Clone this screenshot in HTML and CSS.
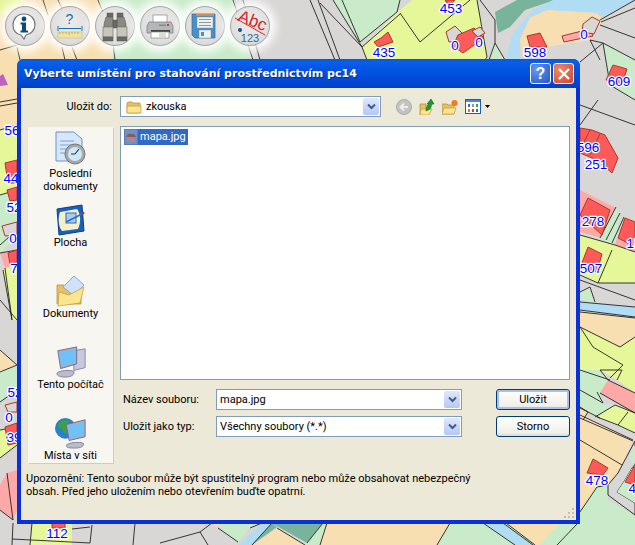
FILE: index.html
```html
<!DOCTYPE html>
<html lang="cs">
<head>
<meta charset="utf-8">
<title>Mapa</title>
<link rel="stylesheet" href="styles.css">
</head>
<body>
<svg class="map" width="635" height="545" viewBox="0 0 635 545">
  <rect class="road" width="635" height="545"/>
  <g class="parcels">
    <polygon class="beige" points="0,0 105,0 116,60 0,60"/>
    <polygon class="yellow" points="0,0 25,0 0,15"/>
    <polygon class="green" points="100,0 233,0 253,60 113,60"/>
    <polygon class="green" points="333,0 400,0 397,12 360,42"/>
    <polygon class="yellow" points="362,47 397,13 412,0 477,0 487,57 488,60 367,60"/>
    <polygon class="green" points="495,43 505,60 489,60"/>
    <polygon class="teal" points="495,12 517,0 555,0 525,10 510,27 498,33"/>
    <polygon class="blue" points="505,60 513,33 533,10 553,0 635,0 602,17 597,13 547,10 530,17 520,37 520,60"/>
    <polygon class="beige" points="547,10 597,13 603,20 590,40 547,47 523,58 520,40 530,18"/>
    <polygon class="green" points="603,43 635,60 635,100 610,85"/>
    <polygon class="beige" points="0,60 17,60 17,125 0,130"/>
    <polygon class="magenta" points="0,76 3,74 8,85 0,86"/>
    <polygon class="yellow" points="0,130 17,125 17,190 0,195"/>
    <polygon class="green" points="0,195 17,190 17,225 2,226 0,250"/>
    <polygon class="green" points="0,226 17,236 0,253"/>
    <polygon class="pink" points="0,253 17,250 17,265 5,268"/>
    <polygon class="yellow" points="3,270 17,263 17,320 12,320"/>
    <polygon class="beige" points="0,350 17,365 0,372"/>
    <polygon class="green" points="0,372 17,365 17,390 0,402"/>
    <polygon class="yellow" points="0,430 17,427 17,445 0,458"/>
    <polygon class="pink" points="7,473 17,470 17,510 13,520 0,510 0,485"/>
    <polygon class="yellow" points="32,523 72,523 72,545 30,545"/>
    <polygon class="beige" points="212,523 222,523 216,527"/>
    <polygon class="green" points="222,523 262,523 250,528 238,542 218,528"/>
    <polygon class="teal" points="273,523 323,523 307,543 275,525"/>
    <polygon class="teal" points="240,545 272,523 277,527 252,545"/>
    <polygon class="blue" points="263,523 272,523 252,545 238,545"/>
    <polygon class="beige" points="277,528 305,545 253,545"/>
    <polygon class="green" points="323,523 327,523 320,545 305,545"/>
    <polygon class="beige" points="327,523 450,523 437,545 320,545"/>
    <polygon class="green" points="450,523 635,523 635,545 437,545"/>
    <polygon class="blue" points="483,523 503,523 533,545 515,545"/>
    <polygon class="beige" points="506,523 578,523 557,545 535,545"/>
    <polygon class="pink" points="580,190 616,208 600,238 580,232"/>
    <polygon class="green" points="580,232 600,238 616,208 620,213 617,237 615,245"/>
    <polygon class="pink" points="617,238 635,248 635,255 615,245"/>
    <polygon class="yellow" points="580,235 615,245 635,252 635,283 598,283 580,275"/>
    <polygon class="green" points="580,292 590,287 595,302 580,300"/>
    <polygon class="blue" points="580,302 635,307 635,317 580,310"/>
    <polygon class="beige" points="580,312 635,318 635,337 620,347 580,327"/>
    <polygon class="yellow" points="580,327 620,347 635,337 635,370 622,370 617,380 600,370 580,370"/>
    <polygon class="green" points="580,370 600,370 608,380 600,393 603,403 580,390"/>
    <polygon class="pink" points="608,380 635,393 635,413 600,393"/>
    <polygon class="yellow" points="622,370 635,370 635,393 617,380"/>
    <polygon class="green" points="580,390 605,405 595,417 580,408"/>
    <polygon class="yellow" points="597,417 615,405 635,413 635,433 618,425"/>
    <polygon class="green" points="605,405 615,405 597,417 595,417"/>
    <polygon class="beige" points="580,415 633,440 620,470 608,485 597,487 580,512"/>
    <polygon class="beige" points="580,407 588,412 583,420 580,418"/>
    <polygon class="green" points="580,512 597,487 608,485 608,500 635,515 635,545 540,545 560,523"/>
    <polygon class="roadline" points="635,441 618,473 608,485 608,495 635,515 635,503 617,492 625,480 635,463"/>
    <polygon class="green" points="630,455 635,445 635,463 625,480 617,492 635,503 635,480"/>
  </g>
  <g class="lines">
    <path d="M43 0 48 15M58 0 65 15M98 0 112 35 115 60M62 47 65 60M72 47 77 60M17 47 20 60M0 50 17 45M233 0 253 60M243 0 260 60"/>
    <path d="M310 0 335 60M318 0 340 60M320 3 362 47 367 60M333 0 362 47M342 0 360 42M360 42 397 12 400 0M362 47 400 14M400 13 420 42M420 42 470 0M477 0 487 57 485 60M480 0 495 20 495 43 489 60M495 43 505 60"/>
    <path d="M600 20 635 0M601 22 635 8M600 25 635 38M603 43 635 60M610 85 635 100M603 43 610 85M590 40 600 60M590 40 603 43M580 62 603 43M580 105 635 125M598 100 580 125"/>
    <path d="M0 102 17 99M0 106 17 103M0 130 17 125M0 195 17 190M0 245 17 230M0 253 17 250M5 268 12 320M0 300 17 320M3 270 12 320M0 350 17 365M0 372 17 365M0 402 17 390M0 430 17 427M0 458 17 445M7 473 13 520M0 510 13 520"/>
    <path d="M13 523 12 545M32 523 30 545M72 529 90 527M92 525 90 543M12 539 90 543M135 523 133 545M160 543 200 532 208 545M200 532 212 523M218 528 238 542M250 528 262 523M272 523 252 545M277 528 305 545M323 523 307 543M327 523 320 545M450 523 437 545M483 523 515 545M503 523 533 545M506 523 535 545M578 523 557 545"/>
    <path d="M600 238 616 207M606 240 620 213M612 243 624 217M580 235 615 245 635 252M580 275 598 283 612 250M598 283 635 283M580 280 635 300M580 292 590 287 595 302M580 302 635 307M580 310 635 317M580 312 635 318M635 337 620 347 580 327M580 327 593 347 623 365 610 378M580 370 610 380"/>
    <path d="M580 390 603 403M600 370 622 370M617 380 622 370M608 380 635 393M600 393 635 413M595 417 615 405 635 413M597 417 618 425 635 433M618 425 628 412M580 415 633 440M580 408 600 418M580 440 622 465M580 512 597 487 608 485M588 412 583 420M580 407 588 412M580 418 633 441M600 370 608 380M597 392 603 403"/>
  </g>
  <g class="houses">
    <polygon class="house" points="445,0 455,0 452,3 447,3"/>
    <polygon class="house" points="388,32 393,42 378,47 374,42 381,38"/>
    <polygon class="roof" points="446,32 455,26 462,33 461,40 449,42"/>
    <polygon class="house" points="458,35 474,28 484,38 463,53 453,46"/>
    <polygon class="roof" points="472,31 480,27 485,33 478,37"/>
    <polygon class="light" points="562,36 590,29 593,36 564,42"/>
    <polygon class="roof" points="583,24 592,17 600,21 594,34 582,32"/>
    <polygon class="house" points="527,36 540,33 547,47 530,47"/>
    <polygon class="house" points="613,65 627,69 622,84 606,80"/>
    <polygon class="house" points="580,128 592,130 605,135 618,158 612,173 597,160 580,153"/>
    <path class="hline" d="M590 130 580 150M600 134 590 155"/>
    <polygon class="house" points="588,198 610,210 602,235 580,215"/>
    <polygon class="house" points="625,218 635,222 635,247 618,238"/>
    <polygon class="house" points="588,247 602,254 597,272 580,268"/>
    <polygon class="house" points="593,459 608,468 603,475 587,473"/>
    <polygon class="house" points="635,465 625,482 635,485"/>
    <polygon class="house" points="5,163 17,160 17,183 8,183"/>
    <polygon class="house" points="7,190 17,187 17,200 10,201"/>
    <polygon class="roof" points="2,226 17,222 17,235 5,236"/>
    <polygon class="house" points="8,253 17,250 17,262 10,264"/>
    <polygon class="roof" points="5,405 17,402 17,412 8,412"/>
    <polygon class="house" points="5,427 17,423 17,443 8,445"/>
    <polygon class="house" points="52,523 65,523 65,528 52,528"/>
  </g>
  <g class="labels">
    <text x="451" y="13">453</text>
    <text x="384" y="57">435</text>
    <text x="455" y="50">0</text>
    <text x="479" y="47">0</text>
    <text x="535" y="57">598</text>
    <text x="584" y="39">0</text>
    <text x="619" y="86">609</text>
    <text x="588" y="152">596</text>
    <text x="596" y="169">251</text>
    <text x="593" y="226">278</text>
    <text x="634" y="248">15</text>
    <text x="591" y="273">507</text>
    <text x="597" y="485">478</text>
    <text x="636" y="493">46</text>
    <text x="57" y="538">112</text>
    <text x="12" y="135">56</text>
    <text x="11" y="183">44</text>
    <text x="14" y="212">52</text>
    <text x="13" y="243">0</text>
    <text x="14" y="273">7</text>
    <text x="15" y="397">52</text>
    <text x="9" y="422">0</text>
    <text x="14" y="442">39</text>
  </g>
</svg>

<nav class="toolbar">
  <span class="tool">
    <svg width="40" height="40" viewBox="0 0 40 40"><path class="i-bubble" d="M19 8C12 8 8 13 8 19c0 5 3 9 8 10l3 4 2-4c5-1 9-5 9-10 0-6-4-11-11-11z"/><circle class="i-blue" cx="19" cy="13" r="2.400"/><path class="i-blue" d="M15.500 16.500h5.500v8h2v2h-7.500v-2h1.500v-6h-1.500z"/></svg>
  </span>
  <span class="tool">
    <svg width="40" height="40" viewBox="0 0 40 40"><rect class="ruler" x="8" y="26" width="24" height="6"/><path class="ruler-ticks" d="M10 26v2M13 26v2M16 26v2M19 26v3M22 26v2M25 26v2M28 26v2"/><path class="arrow" d="M9 22.500h22M8 20v5M32 20v5"/><text class="q" x="19.500" y="18">?</text></svg>
  </span>
  <span class="tool">
    <svg width="40" height="40" viewBox="0 0 40 40"><rect class="bino-d" x="12" y="7" width="6" height="4"/><rect class="bino-d" x="22" y="7" width="6" height="4"/><path class="bino-m" d="M11 11h7v11h-9v-4zM22 11h7l2 7v4h-9z"/><rect class="bino-d" x="18" y="14" width="4" height="8"/><rect class="bino" x="8" y="21" width="10" height="10"/><rect class="bino" x="22" y="21" width="10" height="10"/><rect class="bino-d" x="8" y="31" width="10" height="4"/><rect class="bino-d" x="22" y="31" width="10" height="4"/></svg>
  </span>
  <span class="tool">
    <svg width="40" height="40" viewBox="0 0 40 40"><rect class="pr-paper" x="13" y="9" width="14" height="9"/><path class="pr-body" d="M9 16h22l2 4v7H7v-7z"/><rect class="pr-dark" x="11" y="24" width="19" height="2"/><rect class="pr-paper" x="11" y="26" width="18" height="6"/><rect class="pr-red" x="27" y="18" width="2" height="2"/><rect class="pr-grey" x="19" y="18.500" width="7" height="1.500"/><path class="pr-lines" d="M19 28h7M19 30h7"/></svg>
  </span>
  <span class="tool">
    <svg width="40" height="40" viewBox="0 0 40 40"><path class="fl-body" d="M7 8h23v24H10l-3-3z"/><rect class="fl-top" x="11" y="8" width="18" height="2"/><rect class="fl-label" x="12" y="11" width="16" height="11"/><path class="fl-lines" d="M14 13.500h12M14 16.500h12M14 19.500h12"/><rect class="fl-label" x="14" y="24" width="12" height="8"/><rect class="fl-slot" x="16" y="26" width="3" height="4"/></svg>
  </span>
  <span class="tool">
    <svg width="40" height="40" viewBox="0 0 40 40"><text class="abc" x="22" y="20" transform="rotate(22 22 16)">Abc</text><path class="abc-line" d="M5 12 35 29"/><circle class="dot" cx="10" cy="24" r="2"/><text class="num" x="20" y="36">123</text></svg>
  </span>
</nav>

<section class="dialog">
  <header class="titlebar">
    <h1 class="title">Vyberte umístění pro stahování prostřednictvím pc14</h1>
    <span class="cap cap-help">?</span>
    <span class="cap cap-close"><svg width="14" height="14" viewBox="0 0 14 14"><path class="x" d="M2 2 12 12M12 2 2 12"/></svg></span>
  </header>
  <div class="body">
    <div class="toprow">
      <span class="toplabel">Uložit do:</span>
      <div class="combo combo-top">
        <svg class="mini-folder" width="16" height="14" viewBox="0 0 16 14"><path class="folder" d="M1 3l1-1h4l1 1h7v10H1z"/><path class="folder-f" d="M1 13V6h14v7z"/></svg>
        <span class="value">zkouska</span>
        <span class="drop"><svg width="9" height="7" viewBox="0 0 9 7"><path class="chev" d="M1 1.500 4.500 5 8 1.500"/></svg></span>
      </div>
      <div class="navicons">
        <svg width="16" height="16" viewBox="0 0 16 16"><circle class="back" cx="8" cy="8" r="7.500"/><path class="back-a" d="M12 8H5M8 4.500 4.500 8 8 11.500"/></svg>
        <svg width="16" height="16" viewBox="0 0 16 16"><path class="folder" d="M1 5h6v11H1z"/><path class="folder-f" d="M1 16l1-6h11l-3 6z"/><path class="up" d="M7 12c0-3 1-6 3-7H8l4-5 3 5h-2c-1 2-1 4-2 5z"/></svg>
        <svg width="16" height="16" viewBox="0 0 16 16"><path class="folder" d="M0 5h5l1 1h6v9H0z"/><path class="folder-f" d="M0 15l2-6h12l-2 6z"/><circle class="spark" cx="12.500" cy="4" r="3"/></svg>
        <span class="viewbtn">
          <svg width="16" height="15" viewBox="0 0 16 15"><rect class="v-frame" x=".5" y=".5" width="15" height="14"/><rect class="v-head" x="1" y="1" width="14" height="2"/><rect class="v-a" x="3" y="5" width="2" height="3"/><rect class="v-b" x="7" y="5" width="2" height="3"/><rect class="v-c" x="11" y="5" width="2" height="3"/><rect class="v-d" x="3" y="10" width="2" height="3"/><rect class="v-e" x="7" y="10" width="2" height="3"/><rect class="v-a" x="11" y="10" width="2" height="3"/></svg>
          <svg width="5" height="3" viewBox="0 0 5 3"><path class="v-tri" d="M0 0h5L2.500 3z"/></svg>
        </span>
      </div>
    </div>
    <div class="main">
      <aside class="places">
        <div class="place place-first">
          <svg width="34" height="36" viewBox="0 0 34 36"><path class="doc" d="M2 1h18l8 7v22H2z"/><path class="doc-l" d="M6 10h14M6 14h12M6 18h10M6 22h10"/><circle class="clock" cx="21" cy="23" r="10"/><circle class="clock-f" cx="21" cy="23" r="7"/><path class="clock-h" d="M21 23l4-5M21 23h-4"/></svg>
          <span class="plabel">Poslední<br>dokumenty</span>
        </div>
        <div class="place">
          <svg width="32" height="32" viewBox="0 0 32 32"><path class="desk" d="M2 5 27 1l2 26-25 4z"/><path class="desk-f" d="M5 8 22 5c4 5 4 14 1 20L7 27C3 22 3 13 5 8z"/><rect class="desk-w" x="11" y="9" width="10" height="10"/><path class="desk-p" d="M11 18 27 10"/><circle class="desk-r" cx="28" cy="9" r="1.500"/></svg>
          <span class="plabel">Plocha</span>
        </div>
        <div class="place">
          <svg width="32" height="32" viewBox="0 0 32 32"><path class="folder" d="M2 10h7l3 3h14v16H2z"/><path class="paper" d="M8 12 19 1l10 9-10 11z"/><path class="folder-f" d="M3 31l1-14 10 3 15-8-4 16z"/></svg>
          <span class="plabel">Dokumenty</span>
        </div>
        <div class="place">
          <svg width="32" height="32" viewBox="0 0 34 34"><path class="tower" d="M20 5l12-2v20l-12 3z"/><path class="screen" d="M3 5 23 1v18L6 24z"/><path class="screen-f" d="M5 7l16-3v13L7 21z"/><path class="base" d="M2 29c2-3 14-4 18-2 1 3-2 6-9 6-5 0-9-1-9-4z"/></svg>
          <span class="plabel">Tento počítač</span>
        </div>
        <div class="place">
          <svg width="32" height="32" viewBox="0 0 34 34"><circle class="globe" cx="11" cy="12" r="11"/><path class="land" d="M3 7c4-3 9-5 12-3l-3 5 2 6-4 3-2-5-4-1z"/><path class="screen" d="M12 8 32 3v18L15 25z"/><path class="screen-f" d="M14 10l16-4v13l-14 3z"/><path class="base" d="M12 30c2-3 14-4 18-2 1 3-2 5-9 5-5 0-9 0-9-3z"/></svg>
          <span class="plabel">Místa v síti</span>
        </div>
      </aside>
      <div class="right">
        <div class="list">
          <div class="file">
            <svg width="14" height="16" viewBox="0 0 14 16"><rect class="f-page" x="0" y="0" width="14" height="16" rx="1"/><rect class="f-pic" x="3" y="6" width="8" height="7"/><path class="f-roof" d="M2 8h10L10 5H4z"/></svg>
            <span class="fname">mapa.jpg</span>
          </div>
        </div>
        <div class="form">
          <label class="flabel">Název souboru:</label>
          <div class="combo"><span class="value">mapa.jpg</span><span class="drop"><svg width="9" height="7" viewBox="0 0 9 7"><path class="chev" d="M1 1.500 4.500 5 8 1.500"/></svg></span></div>
          <button class="btn btn-default">Uložit</button>
          <label class="flabel">Uložit jako typ:</label>
          <div class="combo"><span class="value">Všechny soubory (*.*)</span><span class="drop"><svg width="9" height="7" viewBox="0 0 9 7"><path class="chev" d="M1 1.500 4.500 5 8 1.500"/></svg></span></div>
          <button class="btn">Storno</button>
        </div>
      </div>
    </div>
    <p class="warn">Upozornění: Tento soubor může být spustitelný program nebo může obsahovat nebezpečný<br>obsah. Před jeho uložením nebo otevřením buďte opatrní.</p>
    <svg class="grip" width="12" height="12" viewBox="0 0 12 12"><path class="grip-d" d="M9 1h2v2H9zM5 5h2v2H5zM9 5h2v2H9zM1 9h2v2H1zM5 9h2v2H5zM9 9h2v2H9z"/></svg>
  </div>
</section>
</body>
</html>
```
FILE: styles.css
```css
* { box-sizing: border-box; }
html, body { margin: 0; padding: 0; }
body {
  width: 635px; height: 545px; position: relative; overflow: hidden;
  font-family: Roboto, "Noto Sans", sans-serif; font-size: 11px; color: #000;
}
.map { position: absolute; left: 0; top: 0; display: block; }
.road { fill: #d9d6d6; }
.roadline { fill: #d9d6d6; stroke: #333; stroke-width: 1; }
.beige { fill: #f7dfb2; }
.green { fill: #c9ebc9; }
.yellow { fill: #e6f79a; }
.blue { fill: #b0dcf4; }
.teal { fill: #78b39c; }
.pink { fill: #ffa8a8; }
.magenta { fill: #c060c0; }
.light { fill: #ffa8a8; stroke: #a33; stroke-width: 1; }
.house { fill: #ff5a5a; stroke: #a83a2a; stroke-width: 1; }
.hline { fill: none; stroke: #a83a2a; stroke-width: 1; }
.roof { fill: #d9d6d6; stroke: #a83a2a; stroke-width: 1; }
.lines path { fill: none; stroke: #222; stroke-width: .9; }
.labels text {
  font-family: "Liberation Sans", sans-serif; font-size: 13.500px; fill: #0000ff; text-anchor: middle;
  stroke: #fff; stroke-width: 2.500px; paint-order: stroke; stroke-linejoin: round;
}

.toolbar { position: absolute; left: 0; top: 0; padding: 6px 5px; display: flex; gap: 5px; }
.tool {
  width: 40px; height: 40px; border-radius: 50%; display: block;
  border: 1px solid #a8a8a8;
  background: radial-gradient(circle at 50% 40%, #ececec 0%, #e0e0e0 60%, #cfcfcf 100%);
  box-shadow: 0 0 8px 6px rgba(255,255,255,.92);
}
.tool svg { display: block; margin: -1px; }
.i-bubble { fill: #fff; stroke: #777; stroke-width: 1.200; }
.i-blue { fill: #0d4a78; }
.ruler { fill: #f2e4a0; stroke: #c8bb80; stroke-width: .6; }
.ruler-ticks { stroke: #a89a5a; fill: none; stroke-width: .7; }
.arrow { stroke: #1b6fae; fill: none; stroke-width: 1; }
.q { font-family: "Liberation Sans", sans-serif; font-size: 14px; fill: #1b6fae; text-anchor: middle; }
.bino { fill: #c6c6bc; stroke: #6a6a62; stroke-width: .6; }
.bino-m { fill: #8a8a80; stroke: #5a5a52; stroke-width: .6; }
.bino-d { fill: #6a6a62; stroke: #555; stroke-width: .5; }
.pr-paper { fill: #fff; stroke: #888; stroke-width: .7; }
.pr-body { fill: #b4b7ba; stroke: #777; stroke-width: .7; }
.pr-dark { fill: #444; }
.pr-grey { fill: #888; }
.pr-lines { stroke: #999; fill: none; stroke-width: .7; }
.pr-red { fill: #d33; }
.fl-body { fill: #4a90c8; stroke: #2f6a9f; stroke-width: .7; }
.fl-top { fill: #d98c3a; }
.fl-label { fill: #eef1f2; stroke: #789; stroke-width: .4; }
.fl-lines { stroke: #7a8088; fill: none; stroke-width: .8; }
.fl-slot { fill: #4a90c8; }
.abc { font-family: "Liberation Sans", sans-serif; font-size: 17px; fill: #d7262c; text-anchor: middle; }
.abc-line { stroke: #d7262c; fill: none; }
.dot { fill: #14507f; }
.num { font-family: "Liberation Sans", sans-serif; font-size: 11px; fill: #2a6a9c; text-anchor: middle; }

.dialog {
  position: absolute; left: 17px; top: 59px; width: 563px; height: 465px;
  background: #0831d9; border-radius: 7px 7px 0 0;
  padding: 0 4px 4px; display: flex; flex-direction: column;
}
.titlebar {
  height: 29px; margin: 0 -4px; padding: 0 6px 0 7px; display: flex; align-items: center; gap: 2px;
  border-radius: 7px 7px 0 0;
  background: linear-gradient(180deg, #0a56d8 0%, #0a5fe8 10%, #0255e4 35%, #0147d4 80%, #0340c0 100%);
}
.title {
  flex: 1; margin: 0; color: #fff; font-family: "DejaVu Sans", sans-serif; font-size: 11px; font-weight: 700;
  text-shadow: 1px 1px 0 #0a2a8a; white-space: nowrap;
}
.cap {
  width: 21px; height: 21px; border: 1px solid #fff; border-radius: 3px; display: flex; align-items: center; justify-content: center;
  color: #fff; font-family: "Liberation Sans", sans-serif; font-weight: 700; font-size: 16px;
}
.cap-help { background: radial-gradient(circle at 30% 30%, #6a97ee, #2355c8); }
.cap-close { background: radial-gradient(circle at 30% 30%, #ec8a68, #d2452a); }
.x { stroke: #fff; stroke-width: 2.400; fill: none; }

.body {
  flex: 1; background: #ece9d8; position: relative; padding: 8px 6px 0 7px;
  display: flex; flex-direction: column;
}
.toprow { display: flex; align-items: center; height: 21px; }
.toplabel { width: 84px; margin-right: 8px; text-align: right; }
.combo {
  height: 21px; background: #fff; border: 1px solid #7f9db9; display: flex; align-items: center; padding: 0 1px 0 3px;
}
.combo-top { width: 261px; }
.mini-folder { margin-right: 4px; margin-left: 2px; }
.value { flex: 1; white-space: nowrap; }
.drop {
  width: 16px; height: 17px; border-radius: 2px; display: flex; align-items: center; justify-content: center;
  background: linear-gradient(180deg, #dfe8fb, #b4c8f4);
}
.chev { stroke: #3d5a95; stroke-width: 2; fill: none; }
.folder { fill: #e8c060; stroke: #b08a30; stroke-width: .7; }
.folder-f { fill: #fbe58e; stroke: #c09a40; stroke-width: .7; }
.navicons { display: flex; align-items: center; gap: 7px; margin-left: 15px; }
.navicons svg { display: block; }
.back { fill: #c3c3c3; stroke: #aaa; }
.back-a { stroke: #eee; stroke-width: 2; fill: none; }
.up { fill: #1f9a2e; stroke: #106a1a; stroke-width: .6; }
.spark { fill: #f07a20; }
.viewbtn { display: flex; align-items: center; gap: 4px; }
.v-frame { fill: #fff; stroke: #1a5fb4; }
.v-head { fill: #4a8ad8; }
.v-a { fill: #2f6fc0; } .v-b { fill: #9a9a9a; } .v-c { fill: #3aa050; } .v-d { fill: #e07a30; } .v-e { fill: #d04040; }
.v-tri { fill: #000; }

.main { display: flex; gap: 7px; margin-top: 9px; }
.places {
  width: 85px; height: 336px; overflow: hidden; background: #f7f6f1; flex: none;
  box-shadow: 1px 1px 0 #d0cdbd; margin-top: 1px;
  display: flex; flex-direction: column; align-items: center;
}
.place { height: 71px; flex: none; width: 100%; display: flex; flex-direction: column; align-items: center; padding-top: 4px; }
.place-first { height: 73px; }
.plabel { text-align: center; line-height: 13px; white-space: nowrap; }
.place svg { display: block; }
.doc { fill: #d6e6fb; stroke: #6b93c9; }
.doc-l { stroke: #7aa3d8; fill: none; }
.clock { fill: #a8a8a8; stroke: #777; }
.clock-f { fill: #cfe8fb; }
.clock-h { stroke: #333; stroke-width: 1.200; fill: none; }
.desk { fill: #1661bd; stroke: #0d3f85; }
.desk-f { fill: #f7efc6; }
.desk-w { fill: #a9cdf2; stroke: #2a6fc0; }
.desk-p { stroke: #2a6fc0; stroke-width: 1.500; }
.desk-r { fill: #b8332a; }
.paper { fill: #cfe2fa; stroke: #88a8d8; }
.tower { fill: #c6c8de; stroke: #8286ab; }
.screen { fill: #a9adc9; stroke: #6a6e95; }
.screen-f { fill: #6cc3fa; }
.base { fill: #b9bccf; stroke: #7e8198; }
.globe { fill: #2a7fd0; }
.land { fill: #3da23d; }

.right { width: 450px; }
.list { height: 254px; background: #fff; border: 1px solid #7f9db9; padding: 2px 3px; }
.file { display: flex; align-items: center; height: 16px; }
.file svg { display: block; }
.fname { background: #316ac5; color: #fff; padding: 0 2px; line-height: 16px; }
.f-page { fill: #6f8fc8; stroke: #50689a; }
.f-pic { fill: #a08a90; }
.f-roof { fill: #8a5a5a; }
.form {
  display: grid; grid-template-columns: 96px 246px 108px; row-gap: 6px; margin-top: 9px; align-items: center;
}
.flabel { padding-left: 3px; }
.btn {
  height: 21px; width: 74px; margin-left: 34px; border: 1px solid #003c74; border-radius: 3px;
  background: linear-gradient(180deg, #fff, #f0efe8 85%, #d8d6c8);
  font: inherit; color: #000; padding: 0;
}
.btn-default { box-shadow: inset 0 0 0 2px #a8c0ec; }
.warn { margin: 0; padding-left: 5px; line-height: 13px; position: absolute; left: 0; top: 384px; white-space: nowrap; }
.grip { position: absolute; right: 1px; bottom: 1px; }
.grip-d { fill: #c3bfac; }
```
